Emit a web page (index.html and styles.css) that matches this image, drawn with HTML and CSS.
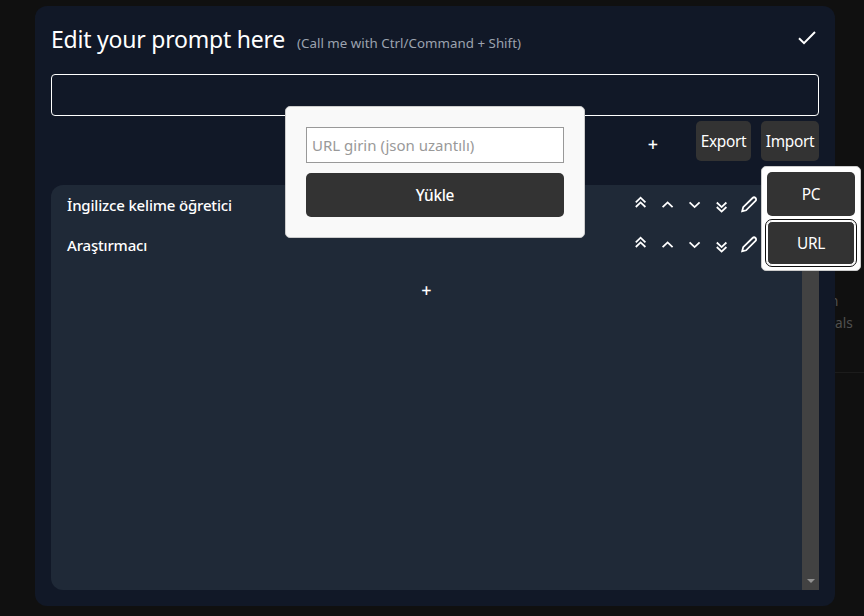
FILE: index.html
```html
<!DOCTYPE html>
<html lang="tr">
<head>
<meta charset="utf-8">
<title>Prompt editor</title>
<link rel="stylesheet" href="styles.css">
</head>
<body>
<svg class="defs" width="0" height="0">
  <symbol id="top" viewBox="0 0 14 18"><path d="M1.8 6.3 6.6 1.7l4.8 4.6M1.8 11l4.8-4.6 4.8 4.6"/></symbol>
  <symbol id="up" viewBox="0 0 14 18"><path d="M1.6 11.2 6.6 6.4l5 4.8"/></symbol>
  <symbol id="down" viewBox="0 0 14 18"><path d="M1.6 6.3l5 4.8 5-4.8"/></symbol>
  <symbol id="bottom" viewBox="0 0 14 18"><path d="M1.8 6.5l4.8 4.6 4.8-4.6M1.8 11l4.8 4.6 4.8-4.6"/></symbol>
  <symbol id="edit" viewBox="0 0 18 18"><path d="M2.2 15.3l1-4.2L12.6 2a2 2 0 0 1 2.9 2.9L6.1 14.3z"/></symbol>
</svg>
<main class="modal">
  <header class="head">
    <h1 class="title">Edit your prompt here</h1>
    <span class="hint">(Call me with Ctrl/Command + Shift)</span>
    <svg class="check" width="20" height="16" viewBox="0 0 20 16"><path d="M2 8.2l5 4.9L18 2"/></svg>
  </header>
  <div class="prompt"></div>
  <div class="toolbar">
    <span class="plus">+</span>
    <button class="button export">Export</button>
    <button class="button import">Import</button>
  </div>
  <section class="list">
    <div class="items">
      <div class="item">
        <span class="name">İngilizce kelime öğretici</span>
        <svg class="icon"><use href="#top"/></svg><svg class="icon"><use href="#up"/></svg><svg class="icon"><use href="#down"/></svg><svg class="icon"><use href="#bottom"/></svg><svg class="icon edit"><use href="#edit"/></svg>
      </div>
      <div class="item">
        <span class="name">Araştırmacı</span>
        <svg class="icon"><use href="#top"/></svg><svg class="icon"><use href="#up"/></svg><svg class="icon"><use href="#down"/></svg><svg class="icon"><use href="#bottom"/></svg><svg class="icon edit"><use href="#edit"/></svg>
      </div>
      <div class="add">+</div>
    </div>
    <div class="scroll"><i class="arrow"></i></div>
  </section>
</main>
<div class="behind"><span>n</span><span>als</span></div>
<div class="dialog">
  <div class="field"><span>URL girin (json uzantılı)</span></div>
  <button class="button load">Yükle</button>
</div>
<div class="menu">
  <button class="button choice">PC</button>
  <button class="button choice focused">URL</button>
</div>
</body>
</html>
```
FILE: styles.css
```css
* { box-sizing: border-box; }
body {
  margin: 0;
  height: 616px;
  padding: 6px 29px 10px 35px;
  overflow: hidden;
  background: #101010;
  color: #fff;
  font: 15px/24px "Noto Sans", sans-serif;
  position: relative;
}
.defs { position: absolute; }
svg { fill: none; stroke: #fff; stroke-width: 1.8; flex: none; }
.modal {
  width: 800px;
  height: 600px;
  padding: 16px;
  border-radius: 12px;
  background: #111827;
}
.head { display: flex; align-items: baseline; height: 52px; line-height: 34px; }
.title { margin: 0; width: 246px; font-size: 23px; letter-spacing: -.22px; font-weight: 400; line-height: 34px; white-space: nowrap; }
.hint { color: #9ca3af; font-size: 13.3px; letter-spacing: .03px; white-space: nowrap; }
.check { margin: 8px 2px 0 auto; align-self: flex-start; stroke-width: 2; }
.prompt { height: 42px; border: 1px solid #fff; border-radius: 4px; }
.toolbar { display: flex; justify-content: flex-end; height: 69px; padding-top: 5px; }
.button {
  border: 0;
  border-radius: 5px;
  padding: 2px 0 0;
  background: #333;
  color: #fff;
  font: 15.4px/24px "Noto Sans", sans-serif;
  letter-spacing: -.3px;
}
.plus { width: 14px; margin: 11px 36px 0 0; text-align: center; font-weight: 500; font-size: 18px; }
.export { width: 55px; height: 40px; margin-right: 10px; }
.import { width: 58px; height: 40px; }
.list { display: flex; height: 405px; background: #1f2937; border-radius: 12px 0 0 12px; }
.items { flex: 1; }
.item { display: flex; align-items: center; height: 40px; padding-left: 16px; }
.name { width: 567px; white-space: nowrap; font-weight: 500; letter-spacing: -.18px; }
.icon { width: 14px; height: 18px; margin-right: 13px; }
.edit { width: 18px; margin: 0 0 0 -2px; }
.add { padding-top: 13px; text-align: center; font-weight: 500; font-size: 18px; }
.scroll { display: flex; width: 17px; padding: 0 4px 7px 5px; align-items: flex-end; background: #424242; }
.arrow { border: 4px solid transparent; border-top-color: #929292; border-bottom: 0; }
.behind {
  position: absolute;
  left: 835px;
  top: 290px;
  width: 29px;
  height: 83px;
  border-bottom: 1px solid #1c1c1c;
  overflow: hidden;
  color: #505050;
  font-size: 13.6px;
  line-height: 22px;
}
.behind span { display: block; }
.behind span:first-child { margin-left: -5px; }
.dialog {
  position: absolute;
  left: 285px;
  top: 106px;
  width: 300px;
  height: 132px;
  padding: 20px;
  border: 1px solid #ccc;
  border-radius: 5px;
  background: #f9f9f9;
}
.field {
  height: 36px;
  margin-bottom: 10px;
  padding: 5px;
  border: 1px solid #999;
  background: #fff;
  color: #999;
  white-space: nowrap;
}
.load { width: 258px; height: 44px; display: block; font-weight: 500; }
.menu {
  position: absolute;
  left: 761px;
  top: 166px;
  width: 100px;
  height: 105px;
  padding: 5px;
  border: 1px solid #ccc;
  border-radius: 5px;
  background: #fff;
}
.choice { display: block; width: 88px; height: 44px; margin-bottom: 5px; }
.focused { border: 1px solid #fff; outline: 1px solid #101010; outline-offset: 1px; }
```
